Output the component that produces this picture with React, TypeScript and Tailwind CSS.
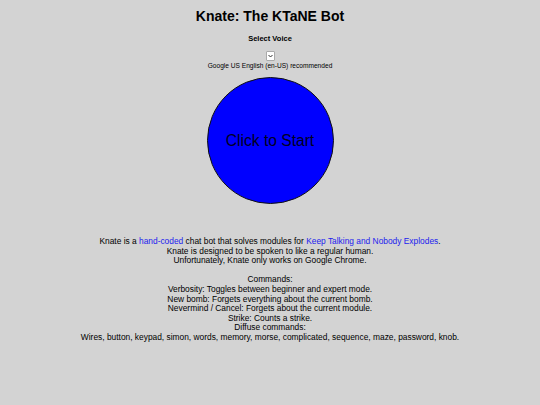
export default function App() {
  return (
    <div className="flex min-h-[405px] w-full flex-col items-center bg-[#d3d3d3] text-center font-['Liberation_Sans',Arial,sans-serif] text-black">
      <h1 className="mt-[8px] text-[14px] font-bold leading-[16px]">Knate: The KTaNE Bot</h1>
      <h3 className="mt-[10px] text-[7.5px] font-bold leading-[9px]">Select Voice</h3>
      <div className="mt-[8px] flex h-[10px] w-[9px] items-center justify-center rounded-[1px] border border-[#aaa] bg-white">
        <svg width="5" height="4" viewBox="0 0 5 4">
          <path d="M0.5 1l2 2 2-2" fill="none" stroke="#333" strokeWidth="1" />
        </svg>
      </div>
      <p className="mt-[1px] text-[6.6px] leading-[8px]">Google US English (en-US) recommended</p>
      <button className="mt-[7px] flex h-[127px] w-[127px] items-center justify-center rounded-full border border-[#111] bg-[#0000ff] text-[15.6px] text-[#000022]">
        Click to Start
      </button>
      <div className="mt-[33px] text-[8.4px] leading-[9.6px]">
        <p>
          Knate is a <a className="text-[#2222ee]">hand-coded</a> chat bot that solves modules for{" "}
          <a className="text-[#2222ee]">Keep Talking and Nobody Explodes</a>.
        </p>
        <p>Knate is designed to be spoken to like a regular human.</p>
        <p>Unfortunately, Knate only works on Google Chrome.</p>
        <p>&nbsp;</p>
        <p>Commands:</p>
        <p>Verbosity: Toggles between beginner and expert mode.</p>
        <p>New bomb: Forgets everything about the current bomb.</p>
        <p>Nevermind / Cancel: Forgets about the current module.</p>
        <p>Strike: Counts a strike.</p>
        <p>Diffuse commands:</p>
        <p>Wires, button, keypad, simon, words, memory, morse, complicated, sequence, maze, password, knob.</p>
      </div>
    </div>
  );
}
